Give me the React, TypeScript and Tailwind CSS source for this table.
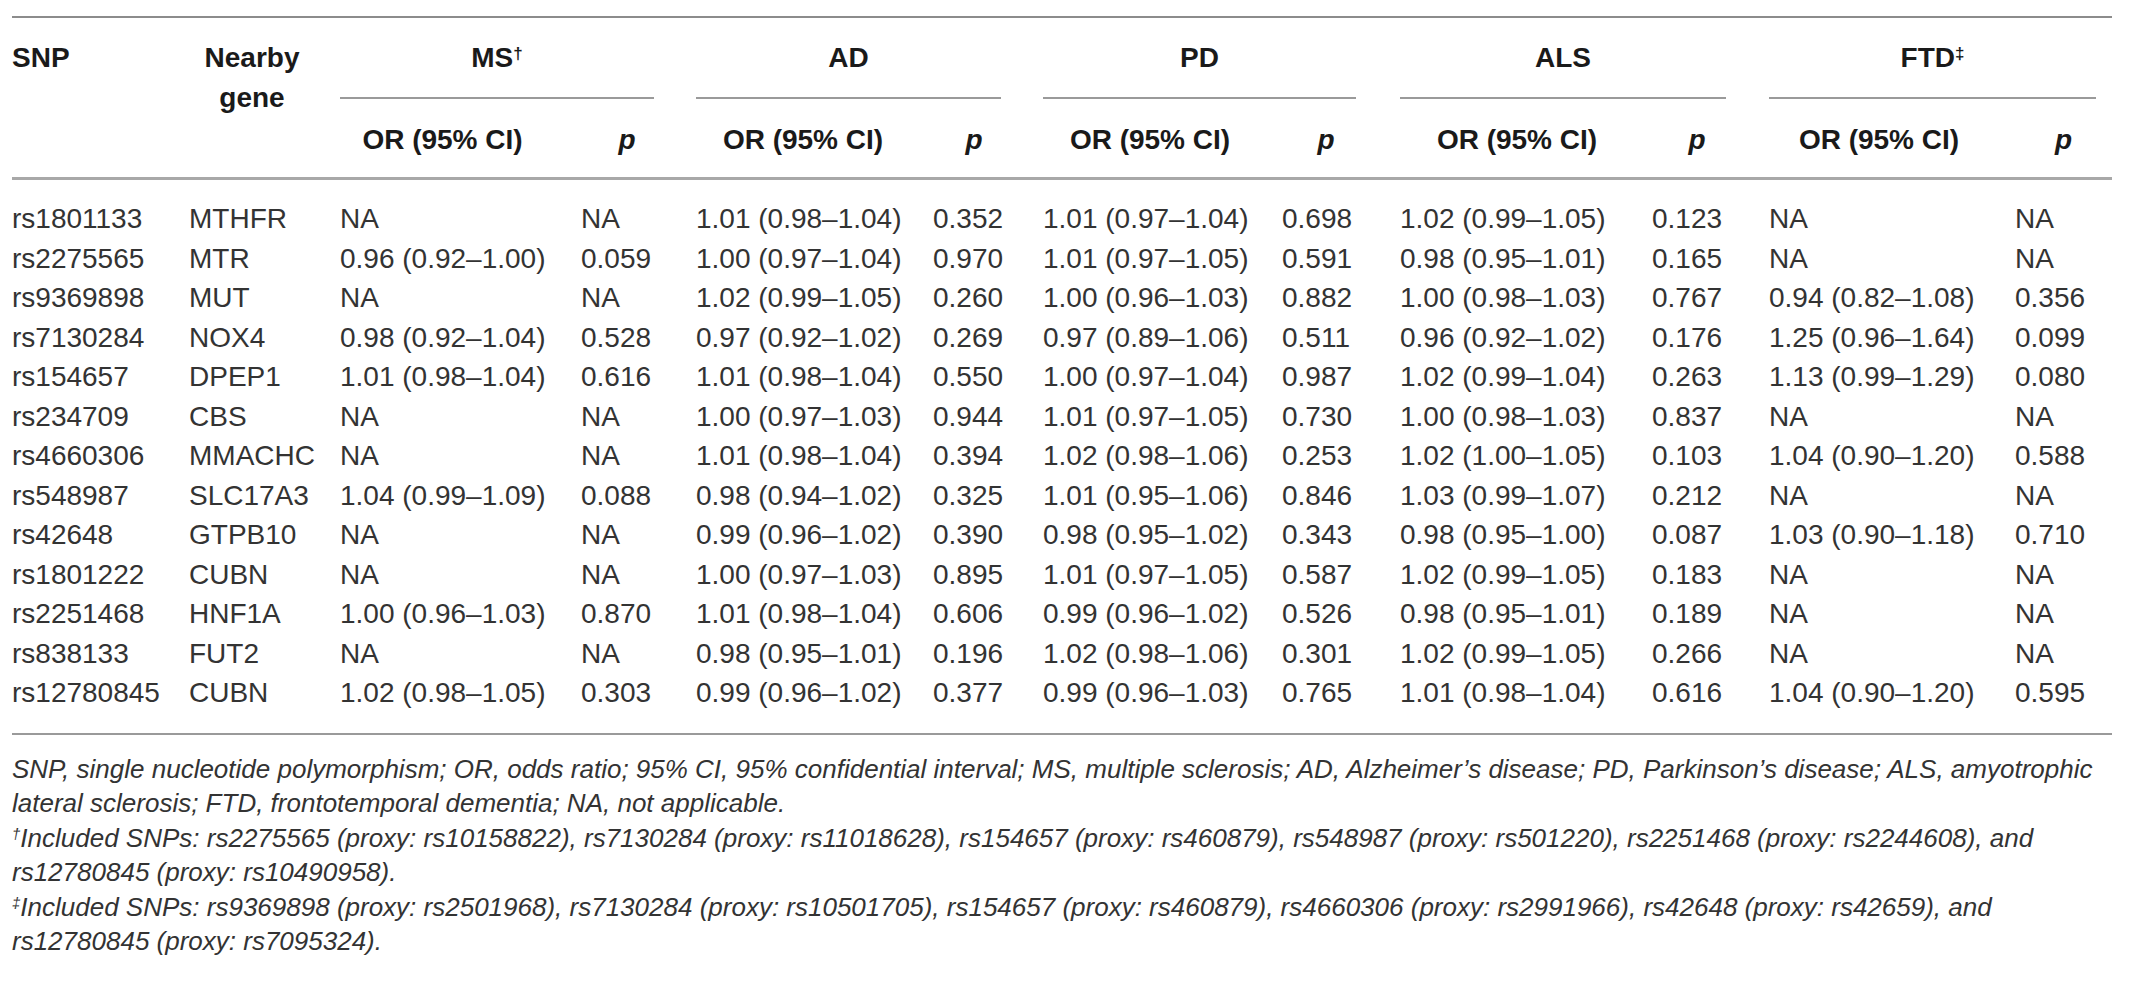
const rows: string[][] = [
  ["rs1801133", "MTHFR", "NA", "NA", "1.01 (0.98–1.04)", "0.352", "1.01 (0.97–1.04)", "0.698", "1.02 (0.99–1.05)", "0.123", "NA", "NA"],
  ["rs2275565", "MTR", "0.96 (0.92–1.00)", "0.059", "1.00 (0.97–1.04)", "0.970", "1.01 (0.97–1.05)", "0.591", "0.98 (0.95–1.01)", "0.165", "NA", "NA"],
  ["rs9369898", "MUT", "NA", "NA", "1.02 (0.99–1.05)", "0.260", "1.00 (0.96–1.03)", "0.882", "1.00 (0.98–1.03)", "0.767", "0.94 (0.82–1.08)", "0.356"],
  ["rs7130284", "NOX4", "0.98 (0.92–1.04)", "0.528", "0.97 (0.92–1.02)", "0.269", "0.97 (0.89–1.06)", "0.511", "0.96 (0.92–1.02)", "0.176", "1.25 (0.96–1.64)", "0.099"],
  ["rs154657", "DPEP1", "1.01 (0.98–1.04)", "0.616", "1.01 (0.98–1.04)", "0.550", "1.00 (0.97–1.04)", "0.987", "1.02 (0.99–1.04)", "0.263", "1.13 (0.99–1.29)", "0.080"],
  ["rs234709", "CBS", "NA", "NA", "1.00 (0.97–1.03)", "0.944", "1.01 (0.97–1.05)", "0.730", "1.00 (0.98–1.03)", "0.837", "NA", "NA"],
  ["rs4660306", "MMACHC", "NA", "NA", "1.01 (0.98–1.04)", "0.394", "1.02 (0.98–1.06)", "0.253", "1.02 (1.00–1.05)", "0.103", "1.04 (0.90–1.20)", "0.588"],
  ["rs548987", "SLC17A3", "1.04 (0.99–1.09)", "0.088", "0.98 (0.94–1.02)", "0.325", "1.01 (0.95–1.06)", "0.846", "1.03 (0.99–1.07)", "0.212", "NA", "NA"],
  ["rs42648", "GTPB10", "NA", "NA", "0.99 (0.96–1.02)", "0.390", "0.98 (0.95–1.02)", "0.343", "0.98 (0.95–1.00)", "0.087", "1.03 (0.90–1.18)", "0.710"],
  ["rs1801222", "CUBN", "NA", "NA", "1.00 (0.97–1.03)", "0.895", "1.01 (0.97–1.05)", "0.587", "1.02 (0.99–1.05)", "0.183", "NA", "NA"],
  ["rs2251468", "HNF1A", "1.00 (0.96–1.03)", "0.870", "1.01 (0.98–1.04)", "0.606", "0.99 (0.96–1.02)", "0.526", "0.98 (0.95–1.01)", "0.189", "NA", "NA"],
  ["rs838133", "FUT2", "NA", "NA", "0.98 (0.95–1.01)", "0.196", "1.02 (0.98–1.06)", "0.301", "1.02 (0.99–1.05)", "0.266", "NA", "NA"],
  ["rs12780845", "CUBN", "1.02 (0.98–1.05)", "0.303", "0.99 (0.96–1.02)", "0.377", "0.99 (0.96–1.03)", "0.765", "1.01 (0.98–1.04)", "0.616", "1.04 (0.90–1.20)", "0.595"],
];

// column widths taken from the reference, SNP .. FTD p
const cols =
  "grid grid-cols-[177px_151px_241px_115px_237px_110px_239px_118px_252px_117px_246px_97px]";

function Group({ label, mark, lineClass }: { label: string; mark?: string; lineClass: string }) {
  return (
    <div className="col-span-2 pt-[20px]">
      <div className={`leading-[40px] text-center ${lineClass}`}>
        {label}
        {mark && <sup className="text-[17px] font-bold">{mark}</sup>}
      </div>
      <div className={`mt-[19px] h-[2px] bg-[#9a9a9a] ${lineClass}`} />
    </div>
  );
}

export default function App() {
  return (
    <div className="min-h-screen bg-white font-['Liberation_Sans',Arial,sans-serif] text-[#333]">
      <div className="pl-[12px] pt-[16px] w-[2112px]">
        <div className="h-[2px] bg-[#8c8c8c]" />

        {/* header */}
        <div className={`${cols} text-[28px] font-bold text-[#1a1a1a]`}>
          <div className="row-span-2 pt-[20px] leading-[40px]">SNP</div>
          <div className="row-span-2 pt-[20px] leading-[40px] text-center pr-[25px]">
            Nearby
            <br />
            gene
          </div>
          <Group label="MS" mark="†" lineClass="mr-[42px]" />
          <Group label="AD" lineClass="mr-[42px]" />
          <Group label="PD" lineClass="mr-[44px]" />
          <Group label="ALS" lineClass="mr-[43px]" />
          <Group label="FTD" mark="‡" lineClass="mr-[16px]" />

          <div className="pt-[21px] pb-[17px] leading-[40px] text-center pr-[36px]">OR (95% CI)</div>
          <div className="pt-[21px] pb-[17px] leading-[40px] text-center pr-[23px] italic">p</div>
          <div className="pt-[21px] pb-[17px] leading-[40px] text-center pr-[23px]">OR (95% CI)</div>
          <div className="pt-[21px] pb-[17px] leading-[40px] text-center pr-[28px] italic">p</div>
          <div className="pt-[21px] pb-[17px] leading-[40px] text-center pr-[25px]">OR (95% CI)</div>
          <div className="pt-[21px] pb-[17px] leading-[40px] text-center pr-[30px] italic">p</div>
          <div className="pt-[21px] pb-[17px] leading-[40px] text-center pr-[18px]">OR (95% CI)</div>
          <div className="pt-[21px] pb-[17px] leading-[40px] text-center pr-[27px] italic">p</div>
          <div className="pt-[21px] pb-[17px] leading-[40px] text-center pr-[26px]">OR (95% CI)</div>
          <div className="pt-[21px] pb-[17px] leading-[40px] text-center italic">p</div>
        </div>
        <div className="h-[3px] bg-[#a8a8a8]" />

        {/* body */}
        <div className="pt-[19px] pb-[20px] text-[28px] leading-[39.5px]">
          {rows.map((r) => (
            <div key={r[0]} className={cols}>
              {r.map((cell, i) => (
                <div key={i} className="whitespace-nowrap">
                  {cell}
                </div>
              ))}
            </div>
          ))}
        </div>
        <div className="h-[2px] bg-[#9a9a9a]" />

        {/* footnotes */}
        <div className="pt-[17px] text-[26px] leading-[34.5px] italic text-[#333] whitespace-nowrap">
          <div>
            SNP, single nucleotide polymorphism; OR, odds ratio; 95% CI, 95% confidential interval; MS, multiple
            sclerosis; AD, Alzheimer’s disease; PD, Parkinson’s disease; ALS, amyotrophic
          </div>
          <div>lateral sclerosis; FTD, frontotemporal dementia; NA, not applicable.</div>
          <div>
            <sup className="text-[15px] leading-none">†</sup>Included SNPs: rs2275565 (proxy: rs10158822), rs7130284
            (proxy: rs11018628), rs154657 (proxy: rs460879), rs548987 (proxy: rs501220), rs2251468 (proxy:
            rs2244608), and
          </div>
          <div>rs12780845 (proxy: rs10490958).</div>
          <div>
            <sup className="text-[15px] leading-none">‡</sup>Included SNPs: rs9369898 (proxy: rs2501968), rs7130284
            (proxy: rs10501705), rs154657 (proxy: rs460879), rs4660306 (proxy: rs2991966), rs42648 (proxy:
            rs42659), and
          </div>
          <div>rs12780845 (proxy: rs7095324).</div>
        </div>
      </div>
    </div>
  );
}
